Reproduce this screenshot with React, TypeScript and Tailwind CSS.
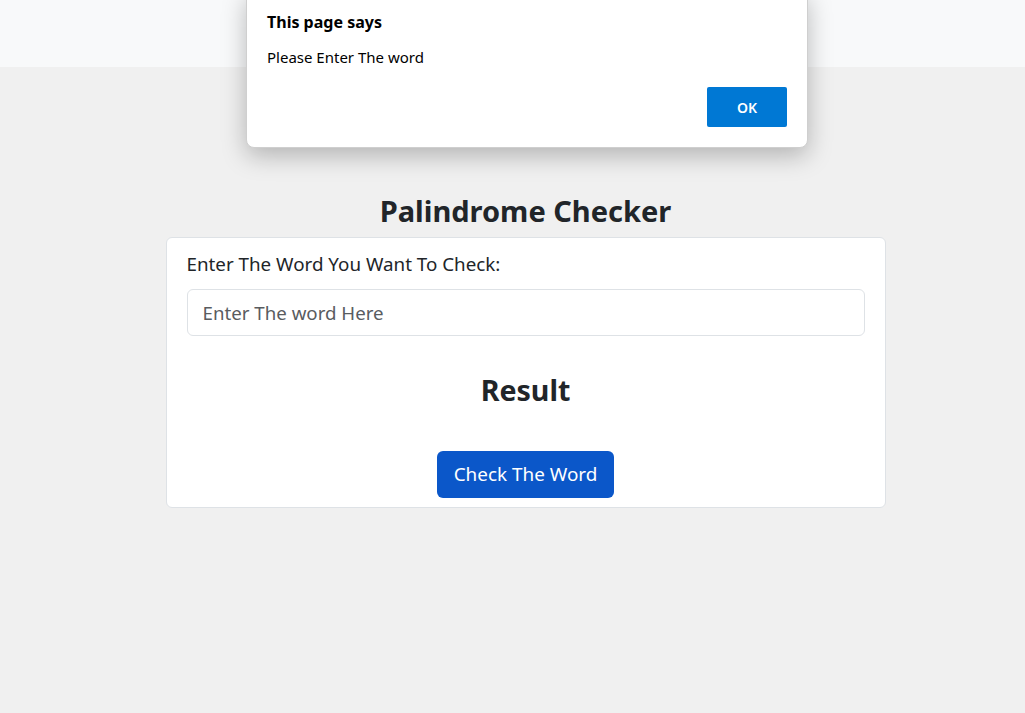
import React from "react";

export default function App() {
  return (
    <div className="relative min-h-[713px] w-full bg-[#f0f0f0] font-['Noto_Sans',sans-serif] text-[#212529]">
      <div className="h-[67px] w-full bg-[#f8f9fa]" />
      <div className="flex flex-col items-center pl-[26px] pt-[122px]">
        <h2 className="text-[29px] font-bold leading-[44px]">Palindrome Checker</h2>
        <div className="mt-[4px] flex w-[720px] flex-col rounded-[6px] border border-[#dee2e6] bg-white px-[20px] pb-[9px] pt-[13px]">
          <label className="text-[18.8px] leading-[27px]">Enter The Word You Want To Check:</label>
          <input
            className="mt-[11px] h-[47px] w-full rounded-[6px] border border-[#dee2e6] px-[15px] text-[18.7px] placeholder-[#595c5f] outline-none"
            placeholder="Enter The word Here"
          />
          <h3 className="mt-[36px] text-center text-[28.6px] font-bold leading-[36px]">Result</h3>
          <div className="mt-[43px] flex justify-center">
            <button className="h-[47px] w-[177px] rounded-[6px] bg-[#0b57c9] text-[18.9px] text-white">
              Check The Word
            </button>
          </div>
        </div>
      </div>
      <div className="absolute left-[246px] top-[-10px] h-[158px] w-[562px] rounded-[8px] border border-[#cfcfcf] bg-white px-[20px] shadow-[0_8px_24px_rgba(0,0,0,0.25)]">
        <div className="mt-[20px] text-[16px] font-bold leading-[22px] text-black">This page says</div>
        <div className="mt-[14px] text-[15px] leading-[20px] text-black">Please Enter The word</div>
        <div className="mt-[20px] flex justify-end">
          <button className="h-[40px] w-[80px] rounded-[2px] bg-[#0078d4] text-[14px] font-semibold text-white">OK</button>
        </div>
      </div>
    </div>
  );
}
